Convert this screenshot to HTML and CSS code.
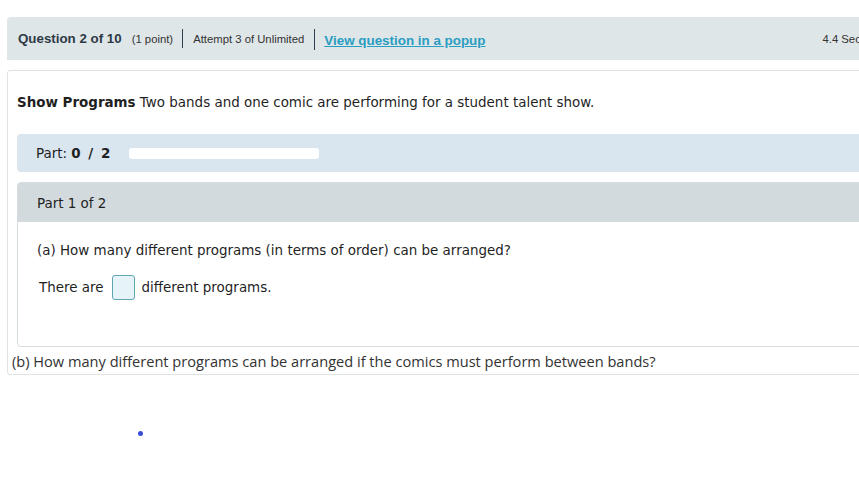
FILE: index.html
```html
<!DOCTYPE html>
<html>
<head>
<meta charset="utf-8">
<link rel="stylesheet" href="styles.css">
</head>
<body>
<div class="page">
  <div class="header">
    <span class="q-title">Question 2 of 10</span>
    <span class="q-points">(1 point)</span>
    <span class="divider"></span>
    <span class="q-attempt">Attempt 3 of Unlimited</span>
    <span class="divider tall"></span>
    <a class="q-link" href="#">View question in a popup</a>
    <span class="q-time">4.4 Section Exercises</span>
  </div>
  <div class="card">
    <p class="intro"><b>Show Programs</b> Two bands and one comic are performing for a student talent show.</p>
    <div class="progress-bar">
      <span class="part-label">Part: <b>0 / 2</b></span>
      <span class="track"></span>
    </div>
    <div class="part-box">
      <div class="part-head">Part 1 of 2</div>
      <div class="part-body">
        <p class="question">(a) How many different programs (in terms of order) can be arranged?</p>
        <div class="answer-row">
          <span>There are</span>
          <span class="input"></span>
          <span>different programs.</span>
        </div>
      </div>
    </div>
    <p class="next">(b) How many different programs can be arranged if the comics must perform between bands?</p>
  </div>
</div>
<span class="dot"></span>
</body>
</html>
```
FILE: styles.css
```css
html, body {
  margin: 0;
  padding: 0;
  background: #fff;
  overflow: hidden;
  width: 859px;
  height: 493px;
}
body {
  position: relative;
}
.page {
  width: 900px;
  margin-left: 7px;
  padding-top: 17px;
}
.header {
  height: 43px;
  background: #dfe6e8;
  border-radius: 4px 0 0 0;
  display: flex;
  align-items: center;
  padding-left: 11px;
  font-family: "Liberation Sans", Arial, sans-serif;
  color: #333;
  white-space: nowrap;
}
.header > * {
  flex-shrink: 0;
}
.q-title {
  font-size: 13.33px;
  font-weight: bold;
  color: #2d3a46;
}
.q-points {
  font-size: 11.3px;
  margin-left: 10px;
}
.divider {
  width: 1px;
  height: 19px;
  background: #2d3e50;
  margin: 0 10px 0 9px;
}
.divider.tall {
  height: 21px;
  margin: 2px 9px 0 10px;
}
.q-attempt {
  font-size: 11.3px;
}
.q-link {
  font-size: 13.4px;
  font-weight: bold;
  color: #2a9dc2;
  text-decoration: underline;
  margin-top: 3px;
}
.q-time {
  font-size: 11.3px;
  margin-left: 337px;
}
.card {
  margin-top: 10px;
  border: 1px solid #dde3e6;
  border-radius: 3px;
  width: 900px;
  font-family: "DejaVu Sans", Verdana, sans-serif;
  font-size: 13.45px;
  color: #1f1f1f;
}
.intro {
  margin: 22px 0 0 9px;
  line-height: 20px;
}
.intro b {
  font-weight: bold;
}
.progress-bar {
  margin: 21px 0 0 9px;
  height: 38px;
  background: #d9e5ef;
  border-radius: 4px 0 0 4px;
  display: flex;
  align-items: center;
  padding-left: 19px;
}
.part-label b {
  font-weight: bold;
  word-spacing: 3px;
}
.track {
  width: 190px;
  height: 11px;
  background: #fff;
  border-radius: 3px;
  margin-left: 19px;
}
.part-box {
  margin: 10px 0 0 9px;
  border: 1px solid #d5dde0;
  border-radius: 4px 0 0 4px;
}
.part-head {
  height: 39px;
  background: #d2dadd;
  display: flex;
  align-items: center;
  padding-left: 19px;
  padding-top: 1px;
  box-sizing: border-box;
}
.part-body {
  padding: 19px 0 46px 19px;
}
.question {
  margin: 0;
  line-height: 20px;
}
.answer-row {
  display: flex;
  align-items: center;
  margin-top: 14px;
  padding-left: 2px;
}
.input {
  width: 21px;
  height: 23px;
  background: #e6f3f8;
  border: 1px solid #5fa6b3;
  border-radius: 3px;
  margin: 0 7px 0 8px;
}
.next {
  margin: 4px 0 3px 4px;
  line-height: 20px;
  font-family: "Open Sans", "Noto Sans", sans-serif;
  font-size: 14.6px;
  color: #333;
}
.dot {
  position: absolute;
  left: 138px;
  top: 431px;
  width: 5px;
  height: 5px;
  border-radius: 50%;
  background: #3b4dd6;
}
```
